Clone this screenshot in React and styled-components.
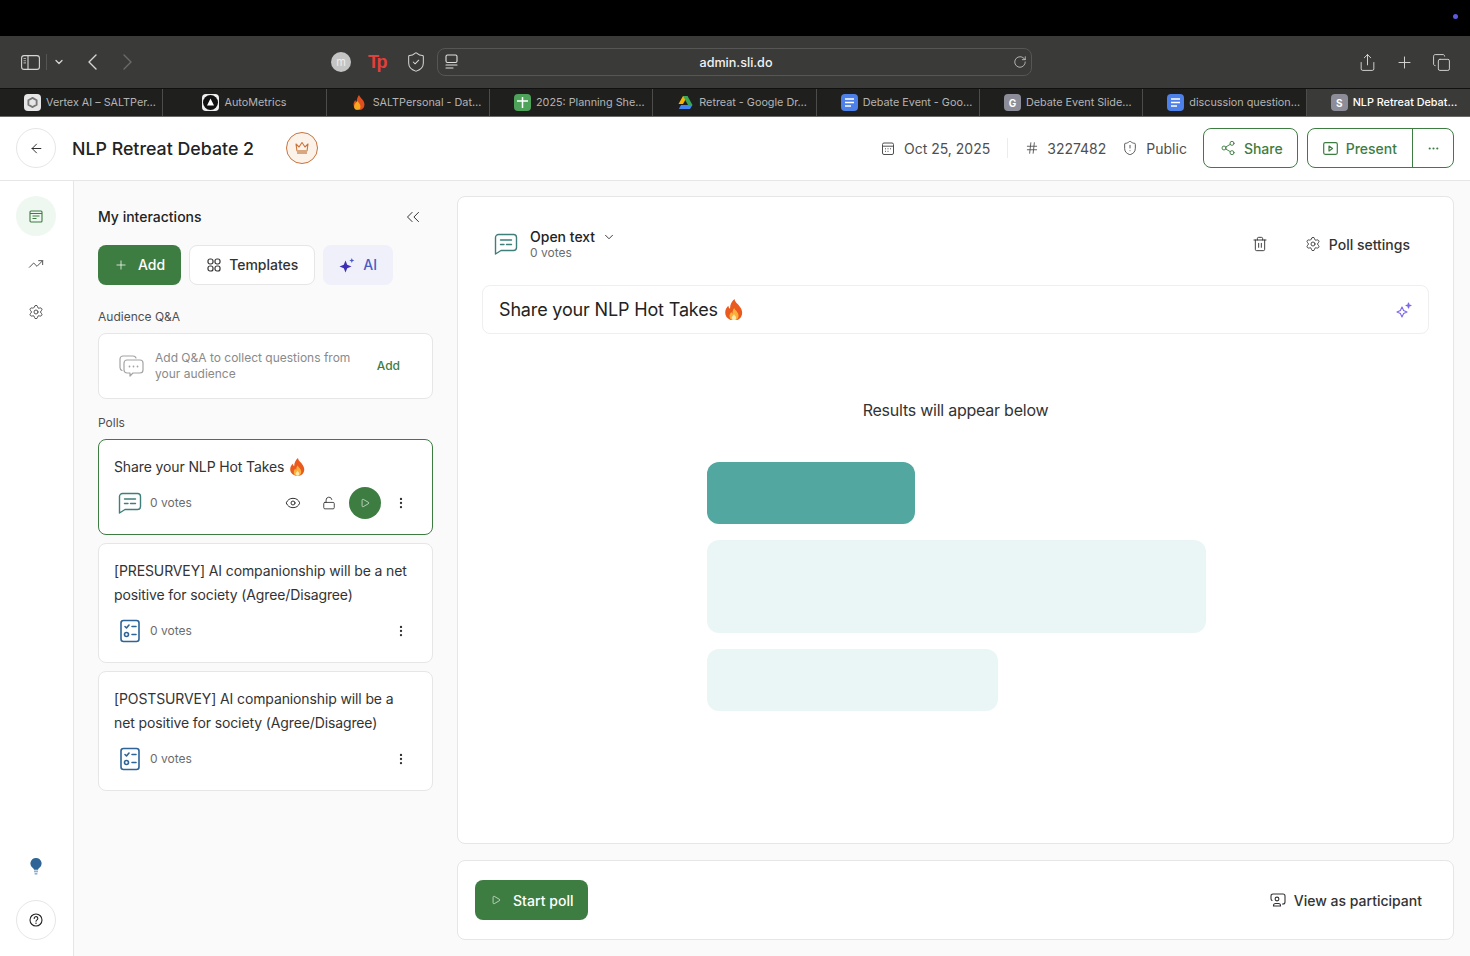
import React from 'react';
import styled, { createGlobalStyle } from 'styled-components';
import {
  ArrowLeft,
  ChevronDown,
  ChevronsLeft,
  Copy,
  Ellipsis,
  EllipsisVertical,
  Eye,
  Hash,
  LockOpen,
  Play,
  Plus,
  RotateCw,
  Settings,
  Share,
  Share2,
  ShieldAlert,
  ShieldCheck,
  Trash2,
  TrendingUp,
} from 'lucide-react';

const GREEN = '#3e7d42';

const GlobalStyle = createGlobalStyle`
  html, body {
    margin: 0;
    height: 956px;
    overflow: hidden;
    background: #fff;
    font-family: Inter, "Liberation Sans", sans-serif;
    color: #232323;
  }
  * { box-sizing: border-box; }
`;

const Page = styled.div`
  display: flex;
  flex-direction: column;
  width: 1470px;
  height: 956px;
`;

const MenuBar = styled.div`
  display: flex;
  justify-content: flex-end;
  align-items: center;
  height: 36px;
  padding: 0 12px 4px 0;
  background: #000;
`;

const Dot = styled.span`
  width: 5px;
  height: 5px;
  border-radius: 50%;
  background: #5a5ae0;
`;

const Toolbar = styled.div`
  display: flex;
  align-items: center;
  height: 52px;
  padding: 0 19px 0 21px;
  background: #3a3a39;
  color: #d6d6d6;
`;

const ToolGroup = styled.div`
  display: flex;
  align-items: center;
  gap: ${(p) => p.$gap || 0}px;
  margin-left: ${(p) => (p.$push ? 'auto' : `${p.$left || 0}px`)};
`;

const ToolDivider = styled.span`
  width: 1px;
  height: 16px;
  background: #555554;
`;

const Avatar = styled.span`
  display: flex;
  align-items: center;
  justify-content: center;
  width: 20px;
  height: 20px;
  border-radius: 50%;
  background: #c4c4c4;
  color: #eee;
  font-size: 11px;
`;

const TpLogo = styled.span`
  width: 20px;
  font-family: "Liberation Sans", sans-serif;
  font-size: 18px;
  font-weight: 700;
  letter-spacing: -2.5px;
  color: #e2403a;
`;

const AddressBar = styled.div`
  display: flex;
  align-items: center;
  justify-content: space-between;
  width: 595px;
  height: 28px;
  margin-left: 10px;
  padding: 0 4px 0 7px;
  border: 1px solid #565655;
  border-radius: 8px;
  background: #3a3a39;
`;

const Url = styled.span`
  font-size: 12.6px;
  font-weight: 500;
  color: #f2f2f2;
`;

const TabBar = styled.div`
  display: grid;
  grid-template-columns: repeat(9, minmax(0, 1fr));
  height: 29px;
  background: #1f1f1e;
  border-top: 1px solid #111;
  border-bottom: 1px solid #6a6a69;
`;

const Tab = styled.div`
  display: flex;
  align-items: center;
  justify-content: ${(p) => (p.$short ? 'center' : 'flex-start')};
  gap: 5px;
  min-width: 0;
  padding-left: ${(p) => (p.$short ? 0 : 24)}px;
  font-size: 10.8px;
  white-space: nowrap;
  color: ${(p) => (p.$active ? '#fff' : '#b4b4b4')};
  font-weight: ${(p) => (p.$active ? 500 : 400)};
  background: ${(p) => (p.$active ? '#3a3a39' : 'transparent')};
  border-right: ${(p) => (p.$active ? 'none' : '1px solid #4c4c4b')};
`;

const TabBadge = styled.span`
  display: flex;
  flex: none;
  align-items: center;
  justify-content: center;
  width: 17px;
  height: 17px;
  border-radius: 4px;
  background: ${(p) => p.$bg || '#8c8d98'};
  color: #fff;
  font-size: 10px;
  font-weight: 700;
`;

const Header = styled.header`
  display: flex;
  align-items: center;
  height: 64px;
  padding: 0 16px 1px;
  border-bottom: 1px solid #e6e6e6;
`;

const RoundButton = styled.span`
  display: flex;
  flex: none;
  align-items: center;
  justify-content: center;
  width: 40px;
  height: 40px;
  border: 1px solid #e6e6e6;
  border-radius: 50%;
  background: #fff;
  color: #232323;
`;

const Title = styled.h1`
  margin: 1px 32px 0 16px;
  font-size: 17.8px;
  line-height: 28px;
  font-weight: 450;
  color: #232323;
`;

const Crown = styled.span`
  display: flex;
  align-items: center;
  justify-content: center;
  width: 32px;
  height: 32px;
  border: 1px solid #c9733c;
  border-radius: 50%;
  background: #fbf3ea;
`;

const Meta = styled.div`
  display: flex;
  align-items: center;
  margin-left: auto;
  margin-right: 16px;
  font-size: 14px;
  color: #4f4f4f;
`;

const MetaItem = styled.span`
  display: flex;
  align-items: center;
  gap: ${(p) => p.$gap || 9}px;
  margin-left: ${(p) => p.$left || 0}px;
`;

const MetaDivider = styled.span`
  width: 1px;
  height: 20px;
  margin: 0 17px;
  background: #ececec;
`;

const OutlineButton = styled.span`
  display: flex;
  align-items: center;
  gap: 8px;
  height: 40px;
  padding: 0 14px 0 16px;
  border: 1px solid ${GREEN};
  border-radius: 8px;
  font-size: 14px;
  font-weight: 450;
  color: ${GREEN};
`;

const SplitButton = styled.div`
  display: flex;
  height: 40px;
  margin-left: 9px;
  border: 1px solid ${GREEN};
  border-radius: 8px;
  color: ${GREEN};
`;

const SplitMain = styled.span`
  display: flex;
  align-items: center;
  gap: 8px;
  padding: 0 15px;
  font-size: 14px;
  font-weight: 450;
  border-right: 1px solid ${GREEN};
`;

const SplitMore = styled.span`
  display: flex;
  align-items: center;
  justify-content: center;
  width: 40px;
`;

const Body = styled.div`
  display: flex;
  flex: 1;
  min-height: 0;
`;

const Rail = styled.nav`
  display: flex;
  flex: none;
  flex-direction: column;
  align-items: center;
  width: 74px;
  padding: 15px 1px 16px 0;
  border-right: 1px solid #e6e6e6;
  color: #555;
`;

const RailItem = styled.span`
  display: flex;
  align-items: center;
  justify-content: center;
  width: 40px;
  height: 40px;
  margin-bottom: 8px;
  border-radius: 50%;
  background: ${(p) => (p.$active ? '#eef7f0' : 'transparent')};
  color: ${(p) => (p.$active ? GREEN : 'inherit')};
`;

const RailBottom = styled.div`
  display: flex;
  flex-direction: column;
  align-items: center;
  gap: 25px;
  margin-top: auto;
`;

const Workspace = styled.main`
  display: flex;
  flex: 1;
  gap: 24px;
  min-width: 0;
  padding: 15px 16px 16px 24px;
  background: #fafafa;
`;

const Sidebar = styled.section`
  display: flex;
  flex: none;
  flex-direction: column;
  width: 335px;
`;

const SideHead = styled.div`
  display: flex;
  align-items: center;
  justify-content: space-between;
  height: 41px;
  margin-bottom: 8px;
  padding-right: 9px;
  font-size: 14px;
  font-weight: 450;
  color: #232323;
`;

const ActionRow = styled.div`
  display: flex;
  gap: 8px;
`;

const ActionButton = styled.span`
  display: flex;
  align-items: center;
  gap: ${(p) => p.$gap || 8}px;
  height: 40px;
  padding: 0 ${(p) => p.$padRight || 15}px 1px ${(p) => p.$padLeft || 15}px;
  border-radius: 8px;
  font-size: 14px;
  font-weight: 450;
  border: 1px solid
    ${(p) => (p.$variant === 'plain' ? '#e6e6e6' : 'transparent')};
  background: ${(p) =>
    p.$variant === 'primary' ? GREEN : p.$variant === 'ai' ? '#eff0fa' : '#fff'};
  color: ${(p) =>
    p.$variant === 'primary' ? '#fff' : p.$variant === 'ai' ? '#4a5cc5' : '#333'};
`;

const SectionLabel = styled.div`
  margin: ${(p) => p.$top}px 0 8px;
  font-size: 12px;
  line-height: 16px;
  font-weight: 400;
  color: #4f4f4f;
`;

const QaCard = styled.div`
  display: flex;
  align-items: center;
  height: 66px;
  padding: 0 32px 0 20px;
  border: 1px solid #e6e6e6;
  border-radius: 8px;
  background: #fff;
`;

const QaText = styled.span`
  flex: 1;
  margin-left: 11px;
  font-size: 12px;
  line-height: 16px;
  color: #8a8a8a;
`;

const QaAdd = styled.span`
  padding-bottom: 2px;
  font-size: 12px;
  font-weight: 450;
  color: ${GREEN};
`;

const PollList = styled.div`
  display: flex;
  flex-direction: column;
  gap: 8px;
`;

const PollCard = styled.article`
  padding: 15px 15px 0;
  height: ${(p) => (p.$active ? 96 : 120)}px;
  border: 1px solid ${(p) => (p.$active ? GREEN : '#e6e6e6')};
  border-radius: 8px;
  background: #fff;
`;

const PollTitle = styled.div`
  display: flex;
  align-items: center;
  gap: 6px;
  font-size: 14px;
  line-height: 24px;
  letter-spacing: -0.12px;
  color: #333;
`;

const PollFoot = styled.div`
  display: flex;
  align-items: center;
  height: 32px;
  margin-top: 8px;
  padding-left: 4px;
  color: #333;
`;

const IconSlot = styled.span`
  display: flex;
  justify-content: center;
  width: 24px;
`;

const Votes = styled.span`
  margin-left: 8px;
  padding-bottom: 2px;
  font-size: 12px;
  color: #6c6c6c;
`;

const PollTools = styled.div`
  display: flex;
  align-items: center;
  margin-left: auto;
  margin-right: -2px;
`;

const ToolSlot = styled.span`
  display: flex;
  align-items: center;
  justify-content: center;
  width: 36px;
`;

const PlayCircle = styled.span`
  display: flex;
  align-items: center;
  justify-content: center;
  width: 32px;
  height: 32px;
  margin: 0 2px;
  border-radius: 50%;
  background: ${GREEN};
  color: #fff;
`;

const Content = styled.section`
  display: flex;
  flex: 1;
  flex-direction: column;
  gap: 16px;
  min-width: 0;
`;

const Panel = styled.div`
  display: flex;
  flex-direction: column;
  flex: ${(p) => (p.$grow ? 1 : 'none')};
  border: 1px solid #e6e6e6;
  border-radius: 8px;
  background: #fff;
`;

const PanelHead = styled.div`
  display: flex;
  align-items: center;
  height: 88px;
  padding: 6px 43px 0 36px;
`;

const TypeLabel = styled.div`
  margin-left: 12px;
`;

const TypeName = styled.div`
  display: flex;
  align-items: center;
  gap: 7px;
  font-size: 14px;
  line-height: 17px;
  font-weight: 450;
  color: #232323;
`;

const TypeVotes = styled.div`
  font-size: 12px;
  line-height: 15px;
  color: #6c6c6c;
`;

const HeadTools = styled.div`
  display: flex;
  align-items: center;
  margin-left: auto;
  color: #333;
`;

const TextAction = styled.span`
  display: flex;
  align-items: center;
  gap: 8px;
  margin-left: ${(p) => p.$left || 0}px;
  font-size: 14px;
  font-weight: 450;
  color: #333;
`;

const Question = styled.div`
  display: flex;
  align-items: center;
  gap: 7px;
  height: 49px;
  margin: 0 24px;
  padding: 0 16px;
  border: 1px solid #efefef;
  border-radius: 8px;
  font-size: 18px;
  letter-spacing: -0.16px;
  font-weight: 400;
  color: #232323;
`;

const Sparkle = styled.span`
  display: flex;
  margin-left: auto;
`;

const ResultsNote = styled.div`
  margin-top: 66px;
  text-align: center;
  font-size: 16px;
  line-height: 20px;
  letter-spacing: -0.24px;
  color: #333;
`;

const Bars = styled.div`
  display: flex;
  flex-direction: column;
  gap: 16px;
  width: 501px;
  margin: 42px auto 0;
  padding-left: 2px;
`;

const Bar = styled.div`
  width: ${(p) => p.$width}px;
  height: ${(p) => p.$height}px;
  border-radius: 12px;
  background: ${(p) => (p.$strong ? '#52a7a0' : '#eaf6f5')};
`;

const FootPanel = styled.div`
  display: flex;
  align-items: center;
  justify-content: space-between;
  height: 78px;
  padding: 0 31px 0 17px;
`;

const StartButton = styled.span`
  display: flex;
  align-items: center;
  gap: 12px;
  height: 40px;
  padding: 0 14px 0 16px;
  border-radius: 8px;
  background: ${GREEN};
  font-size: 14px;
  font-weight: 450;
  letter-spacing: 0.05px;
  color: #fff;
`;

function Flame({ size = 16 }) {
  return (
    <svg width={size} height={size * 1.2} viewBox="0 0 16 19">
      <path
        d="M8.5 0c.3 3 3.200 4.400 5.200 7.500 2.400 3.700 1.800 7.500-.6 9.700C11.700 18.400 10 19 8 19c-4.300 0-7.800-2.800-7.800-7 0-2.800 1.400-4.600 2.800-6 .1 1.300.6 2.200 1.500 2.600C4.300 5.400 6 2 8.500 0z"
        fill="#ea5a1f"
      />
      <path
        d="M8.300 8c.5 2.200 3.700 3.500 3.700 6.800 0 2.500-1.800 4.200-4 4.200s-4-1.700-4-4c0-1.700.9-2.800 1.700-3.600.2.700.5 1.200 1 1.400C6.600 11 7.200 9 8.300 8z"
        fill="#fbb03b"
      />
      <path
        d="M8 13.500c.3 1 1.900 1.700 1.900 3.200 0 1.300-.9 2.100-1.900 2.100s-2-.8-2-2c0-1.500 1.500-2.200 2-3.300z"
        fill="#fde7a9"
      />
    </svg>
  );
}

function ChatLines() {
  return (
    <svg width="24" height="24" viewBox="0 0 24 24" fill="none" stroke="#3f7f7b" strokeWidth="1.4" strokeLinecap="round" strokeLinejoin="round">
      <path d="M1.500 5.500a3 3 0 0 1 3-3h15a3 3 0 0 1 3 3v10a3 3 0 0 1-3 3H7l-5.500 3.500z" />
      <path d="M6.500 8h11M6.500 12.500h3.500M12.500 12.500h5" />
    </svg>
  );
}

function SurveyIcon() {
  return (
    <svg width="20" height="24" viewBox="0 0 20 24" fill="none" stroke="#2f6496" strokeWidth="1.6" strokeLinecap="round" strokeLinejoin="round">
      <rect x="1" y="1.500" width="18" height="21" rx="2.500" />
      <path d="M5 7.500l1.500 1.500L9 6M12 7.500h4M12 15.500h4" />
      <circle cx="6.500" cy="15.500" r="2" />
    </svg>
  );
}

function QaIcon() {
  return (
    <svg width="25" height="24" viewBox="0 0 25 24" fill="none" stroke="#a4a4a4" strokeWidth="1.2" strokeLinecap="round" strokeLinejoin="round">
      <path d="M3 16.500C1.800 16 1 15 1 13.500V5a3 3 0 0 1 3-3h10c1.500 0 2.600.8 3 2" />
      <path d="M5 9a3 3 0 0 1 3-3h13a3 3 0 0 1 3 3v7a3 3 0 0 1-3 3h-7l-3 3v-3H8a3 3 0 0 1-3-3z" />
      <path d="M10.500 12.500h.01M14.500 12.500h.01M18.500 12.500h.01" strokeWidth="1.800" />
    </svg>
  );
}

function FourLoops() {
  return (
    <svg width="14" height="14" viewBox="0 0 14 14" fill="none" stroke="#333" strokeWidth="1.200">
      <rect x="1" y="1" width="5" height="5" rx="2" />
      <rect x="8" y="1" width="5" height="5" rx="2" />
      <rect x="1" y="8" width="5" height="5" rx="2" />
      <rect x="8" y="8" width="5" height="5" rx="2" />
    </svg>
  );
}

function AiStars() {
  return (
    <svg width="16" height="16" viewBox="0 0 16 16" fill="#3f2fb5">
      <path d="M6.500 3.500l1.700 4.300 4.300 1.700-4.300 1.700-1.700 4.300-1.700-4.300L.5 9.500l4.300-1.700z" />
      <path d="M12.800 1l.7 1.800 1.800.7-1.800.7-.7 1.800-.7-1.800-1.800-.7 1.800-.7z" fill="#4a5cc5" />
    </svg>
  );
}

function SparkleOutline() {
  return (
    <svg width="16" height="16" viewBox="0 0 16 16" fill="none" stroke="#7b68ee" strokeWidth="1.100" strokeLinejoin="round">
      <path d="M6 5l1.600 3.400L11 10l-3.400 1.600L6 15l-1.600-3.400L1 10l3.400-1.600z" />
      <path d="M12.500 1l.6 1.900 1.900.6-1.900.6-.6 1.900-.6-1.900-1.900-.6 1.900-.6z" fill="#7b68ee" />
    </svg>
  );
}

function CrownIcon() {
  return (
    <svg width="14" height="14" viewBox="0 0 14 14">
      <path d="M1 3l3 3 3-4.500L10 6l3-3-1 7H2z" fill="none" stroke="#c9733c" strokeWidth="1.100" strokeLinejoin="round" />
      <rect x="2" y="9" width="10" height="4" fill="#d8a77f" />
    </svg>
  );
}

function Bulb() {
  return (
    <svg width="12" height="17" viewBox="0 0 12 17">
      <path d="M6 0a5.500 5.500 0 0 1 3.200 10c-.7.500-1 1-1.200 1.800H4c-.2-.8-.5-1.300-1.200-1.800A5.500 5.500 0 0 1 6 0z" fill="#2f6496" />
      <rect x="4" y="12.500" width="4" height="1.800" fill="#8fb0cf" />
      <rect x="4.600" y="15" width="2.800" height="1.600" fill="#8fb0cf" />
    </svg>
  );
}

function HelpIcon() {
  return (
    <svg width="14" height="14" viewBox="0 0 14 14" fill="none" stroke="#232323" strokeWidth="1.100" strokeLinecap="round">
      <circle cx="7" cy="7" r="6" />
      <path d="M5.200 5.400a1.800 1.800 0 1 1 2.800 1.500c-.6.400-1 .8-1 1.400" />
      <path d="M7 10.300h.01" strokeWidth="1.400" />
    </svg>
  );
}

function ParticipantIcon() {
  return (
    <svg width="16" height="14" viewBox="0 0 16 14" fill="none" stroke="#333" strokeWidth="1.100" strokeLinecap="round">
      <path d="M2 7.500C1.300 7 1 6.500 1 5.500V3a2 2 0 0 1 2-2h10a2 2 0 0 1 2 2v6a2 2 0 0 1-2 2h-.5" />
      <circle cx="7" cy="6" r="1.900" />
      <path d="M3.500 13v-.5a2 2 0 0 1 2-2h3a2 2 0 0 1 2 2v.5z" />
    </svg>
  );
}

function CalendarIcon() {
  return (
    <svg width="12" height="13" viewBox="0 0 12 13" fill="none" stroke="#4f4f4f" strokeWidth="1">
      <rect x="0.500" y="1" width="11" height="11.500" rx="1.500" />
      <path d="M.5 4.200h11" />
      <path d="M3 6.800h1M5.500 6.800h1M8 6.800h1M3 9.300h1M5.500 9.300h1" />
    </svg>
  );
}

function PresentIcon() {
  return (
    <svg width="15" height="13" viewBox="0 0 15 13" fill="none" stroke={GREEN} strokeWidth="1.200" strokeLinejoin="round">
      <rect x="0.700" y="0.700" width="13.600" height="11.600" rx="1.500" />
      <path d="M6 4l3.500 2.500L6 9z" />
    </svg>
  );
}

function ReaderIcon() {
  return (
    <svg width="14" height="16" viewBox="0 0 14 16" fill="none" stroke="#e0e0e0" strokeWidth="1.100" strokeLinecap="round">
      <rect x="1" y="1" width="11" height="7.500" rx="1.500" />
      <path d="M1 11h11M1 14h7" />
    </svg>
  );
}

function SidebarToggle() {
  return (
    <svg width="19" height="15" viewBox="0 0 19 15" fill="none" stroke="#d6d6d6" strokeWidth="1.100">
      <rect x="0.600" y="0.600" width="17.800" height="13.800" rx="2.500" />
      <path d="M7 .6v13.800" />
      <path d="M2.500 3.500h2.500M2.500 5.700h2.500M2.500 7.900h2.500" stroke="#a8a8a8" />
    </svg>
  );
}

function NavChevron({ back }) {
  return (
    <svg width="9" height="16" viewBox="0 0 9 16" fill="none" stroke={back ? '#d6d6d6' : '#6a6a69'} strokeWidth="1.400" strokeLinecap="round" strokeLinejoin="round">
      <path d={back ? 'M8 1L1 8l7 7' : 'M1 1l7 7-7 7'} />
    </svg>
  );
}

function VertexBadge() {
  return (
    <TabBadge $bg="#e6e6e6">
      <svg width="11" height="11" viewBox="0 0 12 12" fill="none" stroke="#777" strokeWidth="2">
        <path d="M6 1l4.500 2.500v5L6 11 1.500 8.500v-5z" />
      </svg>
    </TabBadge>
  );
}

function MetricsBadge() {
  return (
    <TabBadge $bg="#f0f0f0">
      <svg width="15" height="15" viewBox="0 0 15 15">
        <circle cx="7.500" cy="7.500" r="7.500" fill="#111" />
        <path d="M7.500 3.500l3.500 7H4z" fill="#fff" />
      </svg>
    </TabBadge>
  );
}

function FirebaseBadge() {
  return (
    <TabBadge $bg="transparent">
      <svg width="12" height="15" viewBox="0 0 12 15">
        <path d="M6 0c1 3 5.500 5 5.500 9.500A5.500 5.500 0 0 1 .5 9.500C.5 7.500 1.500 6 2.500 5c0 1 .4 1.500 1 2C3.800 4.500 4.500 2 6 0z" fill="#dd4f1e" />
        <path d="M4.500 6C6 8 7.500 9.500 7.500 11.500a3.200 3.200 0 0 1-6.400.200C1.100 9.500 3 7.500 4.500 6z" fill="#f6a821" />
      </svg>
    </TabBadge>
  );
}

function SheetBadge() {
  return (
    <TabBadge $bg="#4ea25a">
      <svg width="17" height="17" viewBox="0 0 17 17" stroke="#fff" strokeWidth="1.500">
        <path d="M3 7h11M8.500 3v11" />
      </svg>
    </TabBadge>
  );
}

function DriveBadge() {
  return (
    <TabBadge $bg="transparent">
      <svg width="15" height="13" viewBox="0 0 15 13">
        <path d="M5 0h4.500l-4.500 8H.5z" fill="#f4b400" />
        <path d="M5 0h4.500L14.500 9H10z" fill="#3aa757" />
        <path d="M3 9h11.500L12 13H.8z" fill="#4285f4" />
      </svg>
    </TabBadge>
  );
}

function DocBadge() {
  return (
    <TabBadge $bg="#4d80e8">
      <svg width="11" height="11" viewBox="0 0 11 11" stroke="#fff" strokeWidth="1.500">
        <path d="M1 2h9M1 5.500h9M1 9h6" />
      </svg>
    </TabBadge>
  );
}

const TABS = [
  { badge: <VertexBadge />, label: 'Vertex AI – SALTPer…' },
  { badge: <MetricsBadge />, label: 'AutoMetrics', short: true },
  { badge: <FirebaseBadge />, label: 'SALTPersonal - Dat…' },
  { badge: <SheetBadge />, label: '2025: Planning She…' },
  { badge: <DriveBadge />, label: 'Retreat - Google Dr…' },
  { badge: <DocBadge />, label: 'Debate Event - Goo…' },
  { badge: <TabBadge>G</TabBadge>, label: 'Debate Event Slide…' },
  { badge: <DocBadge />, label: 'discussion question…' },
  { badge: <TabBadge>S</TabBadge>, label: 'NLP Retreat Debat…', active: true },
];

function BrowserChrome() {
  return (
    <>
      <MenuBar>
        <Dot />
      </MenuBar>
      <Toolbar>
        <ToolGroup $gap={6}>
          <SidebarToggle />
          <ToolDivider />
          <ChevronDown size={12} strokeWidth={2.5} />
        </ToolGroup>
        <ToolGroup $gap={26} $left={23}>
          <NavChevron back />
          <NavChevron />
        </ToolGroup>
        <ToolGroup $gap={17} $left={199}>
          <Avatar>m</Avatar>
          <TpLogo>Tp</TpLogo>
          <ShieldCheck size={22} strokeWidth={1.1} />
        </ToolGroup>
        <AddressBar>
          <ReaderIcon />
          <Url>admin.sli.do</Url>
          <RotateCw size={14} strokeWidth={1.3} />
        </AddressBar>
        <ToolGroup $gap={18} $push>
          <Share size={19} strokeWidth={1.2} />
          <Plus size={19} strokeWidth={1.2} />
          <Copy size={19} strokeWidth={1.2} />
        </ToolGroup>
      </Toolbar>
      <TabBar>
        {TABS.map((t) => (
          <Tab key={t.label} $active={t.active} $short={t.short}>
            {t.badge}
            {t.label}
          </Tab>
        ))}
      </TabBar>
    </>
  );
}

function PageHeader() {
  return (
    <Header>
      <RoundButton>
        <ArrowLeft size={15} strokeWidth={1.5} />
      </RoundButton>
      <Title>NLP Retreat Debate 2</Title>
      <Crown>
        <CrownIcon />
      </Crown>
      <Meta>
        <MetaItem $gap={10}>
          <CalendarIcon />
          Oct 25, 2025
        </MetaItem>
        <MetaDivider />
        <MetaItem $gap={8}>
          <Hash size={14} strokeWidth={1.5} />
          3227482
        </MetaItem>
        <MetaItem $gap={8} $left={16}>
          <ShieldAlert size={16} strokeWidth={1.4} />
          Public
        </MetaItem>
      </Meta>
      <OutlineButton>
        <Share2 size={16} strokeWidth={1.4} />
        Share
      </OutlineButton>
      <SplitButton>
        <SplitMain>
          <PresentIcon />
          Present
        </SplitMain>
        <SplitMore>
          <Ellipsis size={13} />
        </SplitMore>
      </SplitButton>
    </Header>
  );
}

function PollItem({ lines, icon, active }) {
  return (
    <PollCard $active={active}>
      {lines.map((line) => (
        <PollTitle key={line}>
          {line}
          {active && <Flame size={15} />}
        </PollTitle>
      ))}
      <PollFoot>
        <IconSlot>{icon}</IconSlot>
        <Votes>0 votes</Votes>
        <PollTools>
          {active && (
            <>
              <ToolSlot>
                <Eye size={16} strokeWidth={1.5} />
              </ToolSlot>
              <ToolSlot>
                <LockOpen size={14} strokeWidth={1.5} />
              </ToolSlot>
              <PlayCircle>
                <Play size={10} strokeWidth={1.5} />
              </PlayCircle>
            </>
          )}
          <ToolSlot>
            <EllipsisVertical size={14} />
          </ToolSlot>
        </PollTools>
      </PollFoot>
    </PollCard>
  );
}

export default function App() {
  return (
    <Page>
      <GlobalStyle />
      <BrowserChrome />
      <PageHeader />
      <Body>
        <Rail>
          <RailItem $active>
            <svg width="14" height="13" viewBox="0 0 14 13" fill="none" stroke={GREEN} strokeWidth="1.1">
              <rect x="1" y="1" width="12" height="11" rx="1" />
              <path d="M1 3.5h12M3.5 6h7M3.500 8.500h4" />
            </svg>
          </RailItem>
          <RailItem>
            <TrendingUp size={16} strokeWidth={1.5} />
          </RailItem>
          <RailItem>
            <Settings size={16} strokeWidth={1.5} />
          </RailItem>
          <RailBottom>
            <Bulb />
            <RoundButton>
              <HelpIcon />
            </RoundButton>
          </RailBottom>
        </Rail>
        <Workspace>
          <Sidebar>
            <SideHead>
              My interactions
              <ChevronsLeft size={22} strokeWidth={1} />
            </SideHead>
            <ActionRow>
              <ActionButton $variant="primary" $gap={10}>
                <Plus size={14} strokeWidth={1.3} />
                Add
              </ActionButton>
              <ActionButton $variant="plain" $padLeft={17} $padRight={16}>
                <FourLoops />
                Templates
              </ActionButton>
              <ActionButton $variant="ai">
                <AiStars />
                AI
              </ActionButton>
            </ActionRow>
            <SectionLabel $top={24}>Audience Q&amp;A</SectionLabel>
            <QaCard>
              <QaIcon />
              <QaText>Add Q&amp;A to collect questions from your audience</QaText>
              <QaAdd>Add</QaAdd>
            </QaCard>
            <SectionLabel $top={16}>Polls</SectionLabel>
            <PollList>
              <PollItem active lines={['Share your NLP Hot Takes']} icon={<ChatLines />} />
              <PollItem
                lines={['[PRESURVEY] AI companionship will be a net', 'positive for society (Agree/Disagree)']}
                icon={<SurveyIcon />}
              />
              <PollItem
                lines={['[POSTSURVEY] AI companionship will be a', 'net positive for society (Agree/Disagree)']}
                icon={<SurveyIcon />}
              />
            </PollList>
          </Sidebar>
          <Content>
            <Panel $grow>
              <PanelHead>
                <ChatLines />
                <TypeLabel>
                  <TypeName>
                    Open text
                    <ChevronDown size={14} strokeWidth={1.5} />
                  </TypeName>
                  <TypeVotes>0 votes</TypeVotes>
                </TypeLabel>
                <HeadTools>
                  <Trash2 size={16} strokeWidth={1.4} />
                  <TextAction $left={37}>
                    <Settings size={16} strokeWidth={1.3} />
                    Poll settings
                  </TextAction>
                </HeadTools>
              </PanelHead>
              <Question>
                Share your NLP Hot Takes
                <Flame size={18} />
                <Sparkle>
                  <SparkleOutline />
                </Sparkle>
              </Question>
              <ResultsNote>Results will appear below</ResultsNote>
              <Bars>
                <Bar $strong $width={208} $height={62} />
                <Bar $width={499} $height={93} />
                <Bar $width={291} $height={62} />
              </Bars>
            </Panel>
            <Panel>
              <FootPanel>
                <StartButton>
                  <Play size={10} strokeWidth={1.5} />
                  Start poll
                </StartButton>
                <TextAction>
                  <ParticipantIcon />
                  View as participant
                </TextAction>
              </FootPanel>
            </Panel>
          </Content>
        </Workspace>
      </Body>
    </Page>
  );
}
